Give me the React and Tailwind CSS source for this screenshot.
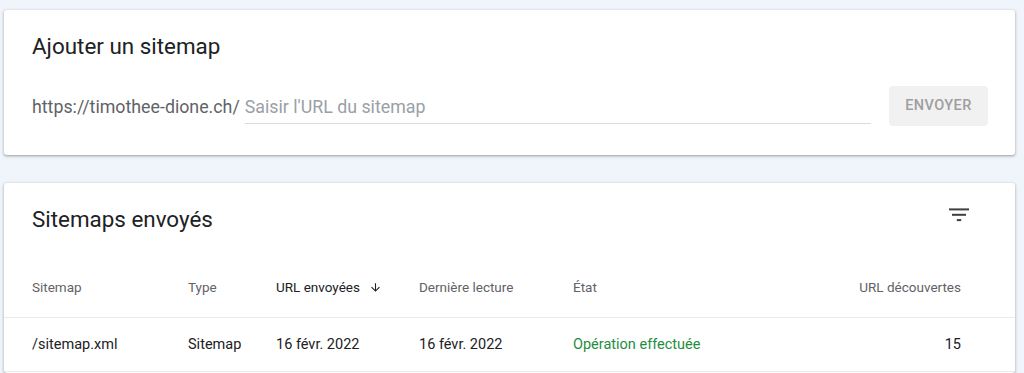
import React from "react";

function FilterIcon() {
  return (
    <svg width="26" height="26" viewBox="0 0 26 26" className="block">
      <rect x="3" y="5.4" width="20" height="2" fill="#3c4043" />
      <rect x="6" y="10.8" width="14" height="2" fill="#3c4043" />
      <rect x="10.8" y="16.1" width="4.4" height="2" fill="#3c4043" />
    </svg>
  );
}

function ArrowDown() {
  return (
    <svg width="13" height="13" viewBox="0 0 24 24" className="block">
      <path
        d="M20 12l-1.41-1.41L13 16.17V4h-2v12.17l-5.58-5.59L4 12l8 8 8-8z"
        fill="#202124"
      />
    </svg>
  );
}

export default function App() {
  const font = { fontFamily: "Roboto, 'Liberation Sans', Arial, sans-serif" };
  return (
    <div
      className="w-[1024px] h-[373px] overflow-hidden bg-[#f0f4fb] pt-[10px] pl-[4px] pr-[9px] flex flex-col gap-[28px]"
      style={font}
    >
      {/* Card 1 */}
      <div className="bg-white rounded-[3px] shadow-[0_1px_2px_rgba(60,64,67,0.3),0_1px_3px_1px_rgba(60,64,67,0.15)] h-[145px] pl-[28px] pr-[27px] pt-[22px] shrink-0">
        <div className="text-[22.4px] leading-[28px] text-[#202124]">Ajouter un sitemap</div>
        <div className="flex items-start mt-[26px]">
          <span className="mt-[9px] text-[17.8px] leading-[24px] text-[#5f6368] whitespace-nowrap">
            https://timothee-dione.ch/
          </span>
          <div className="ml-[5px] mt-[9px] flex-1 border-b border-[#dadce0] pb-[4px]">
            <span className="block text-[17.8px] leading-[24px] text-[#9aa0a6]">
              Saisir l'URL du sitemap
            </span>
          </div>
          <div className="ml-[18px] w-[99px] h-[40px] rounded-[4px] bg-[#f1f1f1] flex items-center justify-center text-[14.5px] font-medium tracking-[0.4px] text-[#9e9e9e]">
            ENVOYER
          </div>
        </div>
      </div>

      {/* Card 2 */}
      <div className="bg-white rounded-[3px] shadow-[0_1px_2px_rgba(60,64,67,0.3),0_1px_3px_1px_rgba(60,64,67,0.15)] flex-1 pt-[22px]">
        <div className="flex items-start justify-between pl-[28px] pr-[43px]">
          <div className="text-[22.4px] leading-[28px] text-[#202124]">Sitemaps envoyés</div>
          <div className="mt-[-2px]">
            <FilterIcon />
          </div>
        </div>
        <div className="grid grid-cols-[156px_88px_143px_154px_1fr_auto] pl-[28px] pr-[54px] pt-[44px] pb-[20px] border-b border-[#e8eaed] text-[13.5px] leading-[20px] text-[#5f6368]">
          <div>Sitemap</div>
          <div>Type</div>
          <div className="flex items-center text-[#202124]">
            URL envoyées
            <span className="ml-[9px]">
              <ArrowDown />
            </span>
          </div>
          <div>Dernière lecture</div>
          <div>État</div>
          <div className="text-right">URL découvertes</div>
        </div>
        <div className="grid grid-cols-[156px_88px_143px_154px_1fr_auto] pl-[28px] pr-[54px] pt-[17px] pb-[16px] border-b border-[#e8eaed] text-[14.5px] leading-[20px] text-[#202124]">
          <div>/sitemap.xml</div>
          <div>Sitemap</div>
          <div>16 févr. 2022</div>
          <div>16 févr. 2022</div>
          <div className="text-[#1e8e3e]">Opération effectuée</div>
          <div className="text-right">15</div>
        </div>
      </div>
    </div>
  );
}
